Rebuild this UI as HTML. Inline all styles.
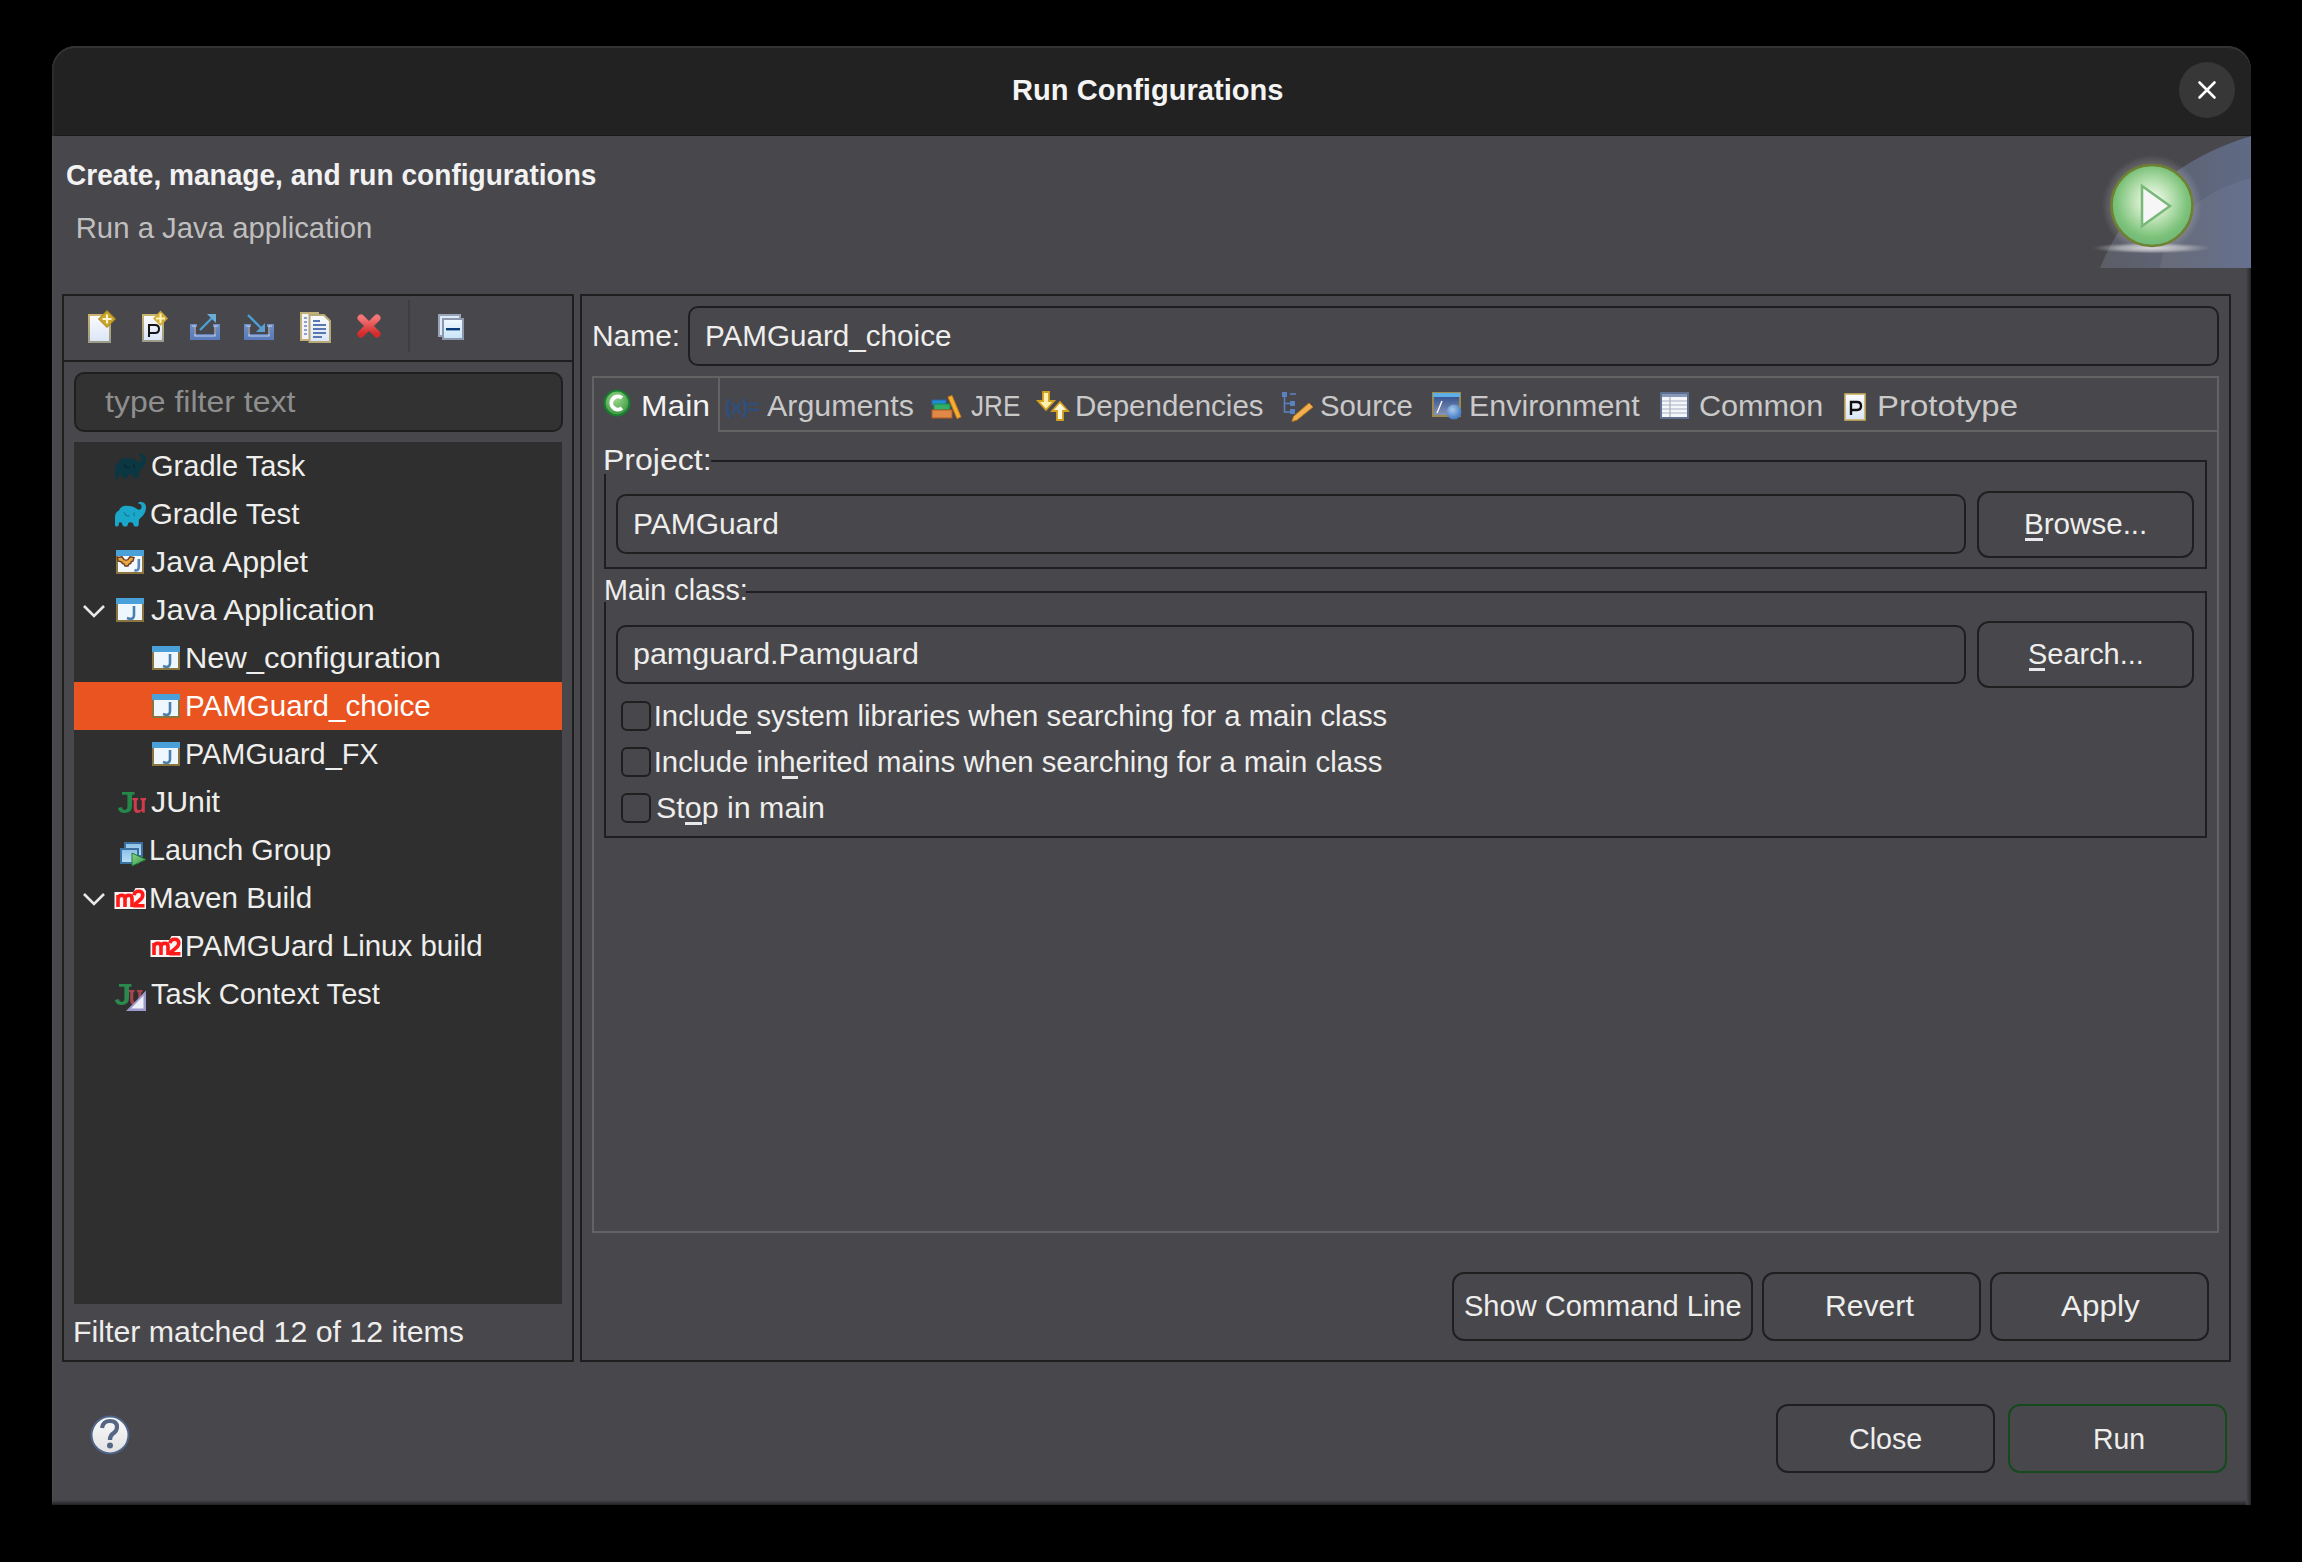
<!DOCTYPE html>
<html><head><meta charset="utf-8">
<style>
*{box-sizing:border-box;margin:0;padding:0}
html,body{width:2302px;height:1562px;background:#000;overflow:hidden}
body{position:relative;font-family:"Liberation Sans",sans-serif;font-size:29.33px;color:#eeeeec}
.a{position:absolute}
.t{position:absolute;line-height:29.33px;height:29.33px;white-space:pre}
.win{left:52px;top:46px;width:2199px;height:1459px;background:#48474c;border-radius:24px 24px 0 0;overflow:hidden}
.tbar{left:52px;top:46px;width:2199px;height:90px;background:#222222;border-radius:24px 24px 0 0;box-shadow:inset 0 2px 0 #333,inset 2px 0 0 #2c2c2c,inset 0 -1px 0 #1a1a1a}
.box{position:absolute;border:2px solid #1f1f1f}
.field{position:absolute;border:2px solid #1f1f1f;border-radius:10px}
.btn{position:absolute;border:2px solid #1f1f1f;border-radius:12px}
.ln{position:absolute;background:#1f1f1f}
.tl{position:absolute;background:#636363}
.gray{color:#c0bfbf}
.tab{color:#c9c9c9}
.cb{position:absolute;width:30px;height:30px;border:2px solid #1f1f1f;border-radius:6px}
.ul{position:absolute;height:3px;background:#e8e8e8}
</style></head><body>
<div class="a win"></div>
<div class="a tbar"></div>
<div class="a" style="left:52px;top:1500px;width:2199px;height:5px;background:linear-gradient(#48474c,#222226)"></div>
<div class="a" style="left:2246px;top:136px;width:5px;height:1369px;background:linear-gradient(90deg,#48474c,#26262a)"></div>
<div class="a" style="left:52px;top:136px;width:1px;height:1366px;background:#4d4c51"></div>
<div class="t" style="left:1011.7px;top:75px;font-weight:700;color:#f4f4f4;transform:scaleX(0.9919);transform-origin:0 0">Run Configurations</div>
<div class="a" style="left:2179px;top:62px;width:56px;height:56px;border-radius:28px;background:#373737"></div>

<!-- header -->
<div class="t" style="left:65.9px;top:160px;font-weight:700;color:#f2f2f2;transform:scaleX(0.9574);transform-origin:0 0">Create, manage, and run configurations</div>
<div class="t gray" style="left:75.7px;top:213px">Run a Java application</div>

<!-- left panel -->
<div class="box" style="left:62px;top:294px;width:512px;height:1068px"></div>
<div class="ln" style="left:64px;top:360px;width:508px;height:2px"></div>
<div class="a" style="left:408px;top:300px;width:2px;height:52px;background:#3c3b40"></div>
<div class="field" style="left:74px;top:372px;width:489px;height:60px;background:#323232"></div>
<div class="t" style="left:105.0px;top:387px;color:#8e8e8e;transform:scaleX(1.0920);transform-origin:0 0">type filter text</div>
<div class="a" style="left:74px;top:442px;width:488px;height:862px;background:#2f2f2f"></div>
<div class="a" style="left:74px;top:682px;width:488px;height:48px;background:#e95420"></div>
<div class="t" style="left:150.6px;top:451px;transform:scaleX(0.9896);transform-origin:0 0">Gradle Task</div>
<div class="t" style="left:150.0px;top:499px">Gradle Test</div>
<div class="t" style="left:151.0px;top:547px;transform:scaleX(1.0351);transform-origin:0 0">Java Applet</div>
<div class="t" style="left:151.0px;top:595px;transform:scaleX(1.0550);transform-origin:0 0">Java Application</div>
<div class="t" style="left:184.8px;top:643px;transform:scaleX(1.0534);transform-origin:0 0">New_configuration</div>
<div class="t" style="left:185.0px;top:691px;color:#ffffff;transform:scaleX(1.0075);transform-origin:0 0">PAMGuard_choice</div>
<div class="t" style="left:185.0px;top:739px;transform:scaleX(0.9845);transform-origin:0 0">PAMGuard_FX</div>
<div class="t" style="left:151.2px;top:787px;transform:scaleX(1.0333);transform-origin:0 0">JUnit</div>
<div class="t" style="left:149.2px;top:835px;transform:scaleX(0.9808);transform-origin:0 0">Launch Group</div>
<div class="t" style="left:149.0px;top:883px;transform:scaleX(1.0108);transform-origin:0 0">Maven Build</div>
<div class="t" style="left:185.4px;top:931px;transform:scaleX(1.0055);transform-origin:0 0">PAMGUard Linux build</div>
<div class="t" style="left:151.0px;top:979px;transform:scaleX(0.9913);transform-origin:0 0">Task Context Test</div>
<div class="t" style="left:73.2px;top:1317px;transform:scaleX(1.0340);transform-origin:0 0">Filter matched 12 of 12 items</div>

<!-- right panel -->
<div class="box" style="left:580px;top:294px;width:1651px;height:1068px"></div>
<div class="t" style="left:591.7px;top:321px;transform:scaleX(1.0198);transform-origin:0 0">Name:</div>
<div class="field" style="left:688px;top:306px;width:1531px;height:60px"></div>
<div class="t" style="left:705.0px;top:321px;transform:scaleX(1.0100);transform-origin:0 0">PAMGuard_choice</div>

<!-- tab folder -->
<div class="a" style="left:592px;top:376px;width:1627px;height:857px;border:2px solid #636363"></div>
<div class="tl" style="left:718px;top:378px;width:2px;height:54px"></div>
<div class="tl" style="left:718px;top:430px;width:1500px;height:2px"></div>
<div class="t" style="left:641.2px;top:391px;color:#f4f4f4;transform:scaleX(1.0864);transform-origin:0 0">Main</div>
<div class="t tab" style="left:767.0px;top:391px;transform:scaleX(1.0357);transform-origin:0 0">Arguments</div>
<div class="t tab" style="left:970.6px;top:391px;transform:scaleX(0.8906);transform-origin:0 0">JRE</div>
<div class="t tab" style="left:1075.0px;top:391px;transform:scaleX(1.0054);transform-origin:0 0">Dependencies</div>
<div class="t tab" style="left:1320.0px;top:391px">Source</div>
<div class="t tab" style="left:1468.9px;top:391px;transform:scaleX(1.0370);transform-origin:0 0">Environment</div>
<div class="t tab" style="left:1699.0px;top:391px;transform:scaleX(1.0435);transform-origin:0 0">Common</div>
<div class="t tab" style="left:1876.8px;top:391px;transform:scaleX(1.1230);transform-origin:0 0">Prototype</div>

<!-- project group -->
<div class="t" style="left:603.4px;top:445px;transform:scaleX(1.0915);transform-origin:0 0">Project:</div>
<div class="ln" style="left:711px;top:460px;width:1496px;height:2px"></div>
<div class="ln" style="left:2205px;top:460px;width:2px;height:109px"></div>
<div class="ln" style="left:604px;top:567px;width:1603px;height:2px"></div>
<div class="ln" style="left:604px;top:474px;width:2px;height:95px"></div>
<div class="field" style="left:616px;top:494px;width:1350px;height:60px"></div>
<div class="t" style="left:633.3px;top:509px;transform:scaleX(1.0210);transform-origin:0 0">PAMGuard</div>
<div class="btn" style="left:1977px;top:491px;width:217px;height:67px"></div>
<div class="t" style="left:2024.0px;top:509px;transform:scaleX(1.0085);transform-origin:0 0">Browse...</div>
<div class="ul" style="left:2025px;top:538px;width:18px"></div>

<!-- main class group -->
<div class="t" style="left:603.6px;top:575px;transform:scaleX(0.9801);transform-origin:0 0">Main class:</div>
<div class="ln" style="left:746px;top:591px;width:1461px;height:2px"></div>
<div class="ln" style="left:2205px;top:591px;width:2px;height:247px"></div>
<div class="ln" style="left:604px;top:836px;width:1603px;height:2px"></div>
<div class="ln" style="left:604px;top:602px;width:2px;height:236px"></div>
<div class="field" style="left:616px;top:625px;width:1350px;height:59px"></div>
<div class="t" style="left:632.9px;top:639px;transform:scaleX(1.0380);transform-origin:0 0">pamguard.Pamguard</div>
<div class="btn" style="left:1977px;top:621px;width:217px;height:67px"></div>
<div class="t" style="left:2028.0px;top:639px;transform:scaleX(0.9867);transform-origin:0 0">Search...</div>
<div class="ul" style="left:2029px;top:668px;width:16px"></div>

<div class="cb" style="left:621px;top:701px"></div>
<div class="t" style="left:653.7px;top:701px">Include system libraries when searching for a main class</div>
<div class="ul" style="left:736px;top:731px;width:15px"></div>
<div class="cb" style="left:621px;top:747px"></div>
<div class="t" style="left:653.7px;top:747px">Include inherited mains when searching for a main class</div>
<div class="ul" style="left:782px;top:776px;width:16px"></div>
<div class="cb" style="left:621px;top:793px"></div>
<div class="t" style="left:655.7px;top:793px;transform:scaleX(1.0365);transform-origin:0 0">Stop in main</div>
<div class="ul" style="left:685px;top:822px;width:17px"></div>

<!-- bottom buttons -->
<div class="btn" style="left:1452px;top:1272px;width:301px;height:69px"></div>
<div class="t" style="left:1463.7px;top:1291px;transform:scaleX(0.9903);transform-origin:0 0">Show Command Line</div>
<div class="btn" style="left:1762px;top:1272px;width:219px;height:69px"></div>
<div class="t" style="left:1824.9px;top:1291px;transform:scaleX(1.0274);transform-origin:0 0">Revert</div>
<div class="btn" style="left:1990px;top:1272px;width:219px;height:69px"></div>
<div class="t" style="left:2061.4px;top:1291px;transform:scaleX(1.0722);transform-origin:0 0">Apply</div>
<div class="btn" style="left:1776px;top:1404px;width:219px;height:69px"></div>
<div class="t" style="left:1848.6px;top:1424px;transform:scaleX(0.9778);transform-origin:0 0">Close</div>
<div class="btn" style="left:2008px;top:1404px;width:219px;height:69px;border-color:#154a1c"></div>
<div class="t" style="left:2092.7px;top:1424px;transform:scaleX(0.9673);transform-origin:0 0">Run</div>

<svg class="a" style="left:0;top:0" width="2302" height="1562" viewBox="0 0 2302 1562">

<defs>
 <linearGradient id="docg" x1="0" y1="0" x2="0" y2="1"><stop offset="0" stop-color="#fbfbfd"/><stop offset="1" stop-color="#d9e5f6"/></linearGradient>
 <linearGradient id="docb" x1="0" y1="0" x2="0" y2="1"><stop offset="0" stop-color="#c8b46c"/><stop offset="1" stop-color="#9c9c8c"/></linearGradient>
 <linearGradient id="tray" x1="0" y1="0" x2="0" y2="1"><stop offset="0" stop-color="#6f8fc8"/><stop offset="1" stop-color="#5878b8"/></linearGradient>
 <linearGradient id="redx" x1="0" y1="0" x2="0" y2="1"><stop offset="0" stop-color="#f27676"/><stop offset="1" stop-color="#d42a2a"/></linearGradient>
 <linearGradient id="wing" x1="0" y1="0" x2="0" y2="1"><stop offset="0" stop-color="#f2f8ff"/><stop offset="1" stop-color="#c6e4f8"/></linearGradient>
 <radialGradient id="cg" cx="0.45" cy="0.35" r="0.6"><stop offset="0" stop-color="#9fd88a"/><stop offset="1" stop-color="#3f9d47"/></radialGradient>
 <radialGradient id="playg" cx="0.5" cy="0.45" r="0.55"><stop offset="0" stop-color="#ffffff"/><stop offset="0.35" stop-color="#c8e8c0"/><stop offset="0.8" stop-color="#7cc27a"/><stop offset="1" stop-color="#6fb779"/></radialGradient>
 <radialGradient id="shad" cx="0.5" cy="0.5" r="0.5"><stop offset="0" stop-color="#d8d8dc" stop-opacity="0.95"/><stop offset="0.55" stop-color="#c0c0c6" stop-opacity="0.7"/><stop offset="1" stop-color="#a0a0a8" stop-opacity="0"/></radialGradient>
 <radialGradient id="halo" cx="0.5" cy="0.5" r="0.5"><stop offset="0.6" stop-color="#ffffff" stop-opacity="0.35"/><stop offset="1" stop-color="#ffffff" stop-opacity="0"/></radialGradient>
 <linearGradient id="wedge" x1="0" y1="0" x2="1" y2="0"><stop offset="0" stop-color="#5c5d66"/><stop offset="1" stop-color="#5f6a85"/></linearGradient>
 <linearGradient id="wedge2" x1="0" y1="0" x2="1" y2="0"><stop offset="0" stop-color="#686b78"/><stop offset="1" stop-color="#65718f"/></linearGradient>
 <radialGradient id="ballg" cx="0.4" cy="0.35" r="0.65"><stop offset="0" stop-color="#a8c8ec"/><stop offset="1" stop-color="#3f78c0"/></radialGradient>
 <linearGradient id="helpg" x1="0" y1="0" x2="0" y2="1"><stop offset="0" stop-color="#fafafa"/><stop offset="1" stop-color="#e2e2e2"/></linearGradient>
 <linearGradient id="lg" x1="0" y1="0" x2="0" y2="1"><stop offset="0" stop-color="#8cc0e8"/><stop offset="1" stop-color="#b8e0f6"/></linearGradient>
 <linearGradient id="gr" x1="0" y1="0" x2="1" y2="1"><stop offset="0" stop-color="#8fd08a"/><stop offset="1" stop-color="#2d9a45"/></linearGradient>

 <g id="japp">
  <rect x="2" y="4" width="28" height="24" fill="#8a7540"/>
  <rect x="4" y="10" width="24" height="16" fill="#eef7fd"/>
  <rect x="2" y="4" width="28" height="6" fill="#4aa0d8"/>
  <path d="M20 12 L20 21 Q20 25 16 25 L13 24" fill="none" stroke="#4b7fb0" stroke-width="2.6"/>
 </g>
 <g id="m2">
  <path d="M0.5 10 H19.5 L21.5 6 H30 L32 9 V27 H0.5 Z" fill="#f8f4f4"/>
  <path d="M4 25 V13 M4 16.5 Q4.5 13.2 7.8 13.2 Q11 13.2 11 16.5 V25 M11 16.5 Q11.5 13.2 14.8 13.2 Q18 13.2 18 16.5 V25" fill="none" stroke="#ff1a1a" stroke-width="3.6"/>
  <path d="M20 13.2 Q20.6 9.2 24.6 9.2 Q28.8 9.2 28.8 13 Q28.8 15.8 25.5 18.3 L21 22 V23.8 H30.5" fill="none" stroke="#ff1a1a" stroke-width="3.6"/>
 </g>
 <g id="J"><path d="M8 6 H20.5 V8.8 H18 V20 Q18 27 10.5 27 Q5 27 3.8 22 L7.6 21 Q8.4 24 10.6 24 Q13.4 24 13.4 20 V8.8 H8 Z"/></g>
 <g id="u"><path d="M18 12 H23.5 V14.3 H22.3 V21 Q22.3 24.2 24.8 24.2 Q27.3 24.2 27.3 21 V14.3 H26 V12 H31.5 V14.3 H30.3 V26.6 H27.6 V24.6 Q26.2 27 23.2 27 Q19.2 27 19.2 22 V14.3 H18 Z"/></g>
 <g id="eleph">
  <path d="M1 27 L1 19 Q1 14 5 12.5 Q6.5 8 12 7.8 Q19 7.8 23 11 Q25 12.3 26.8 11 Q28.3 9 27 6.8 Q25.8 5.6 24.5 5.8 Q23.6 4.2 26.5 3.8 Q31.5 4 32 9 Q32 15.5 27 19.5 L25 21.5 L24.6 27.3 Q24.3 28.6 22.8 28.6 L21.3 28.6 Q20 28.6 19.6 27.2 L18.8 24.8 Q16.5 23.8 14.4 24.8 L13.6 27.3 Q13.2 28.6 11.8 28.6 L10.4 28.6 Q9 28.6 8.6 27.2 L7.8 24.8 Q6 23.8 5 24.8 L4.6 27.3 Q4.2 28.6 2.8 28.6 Q1 28.6 1 27 Z"/>
  <path d="M10 14 Q12 19 15.5 17.5 M20 14.5 Q20.5 16.5 20 18" fill="none" stroke="#000" stroke-opacity="0.22" stroke-width="1.5"/>
 </g>
 <g id="chev"><path d="M-10 -5 L0 5 L10 -5" fill="none" stroke="#e8e8e8" stroke-width="2.6"/></g>
</defs>

<path d="M2199.5 82.5 L2214.5 97.5 M2214.5 82.5 L2199.5 97.5" stroke="#ffffff" stroke-width="2.6" stroke-linecap="round"/>
<path d="M2100 268 Q2140 170 2251 136 L2251 268 Z" fill="url(#wedge)"/>
<path d="M2160 268 Q2170 200 2251 178 L2251 268 Z" fill="url(#wedge2)"/>
<ellipse cx="2152" cy="248" rx="60" ry="5.5" fill="url(#shad)"/>
<circle cx="2152" cy="205" r="50" fill="url(#halo)"/>
<circle cx="2152" cy="205.5" r="40.5" fill="url(#playg)" stroke="#6f8030" stroke-width="2.6"/>
<path d="M2142 186 L2170 206 L2142 226 Z" fill="#f6f6f6" stroke="#78b878" stroke-width="2.5" stroke-linejoin="miter"/>
<rect x="89" y="315" width="21" height="27" fill="url(#docg)" stroke="url(#docb)" stroke-width="2"/>
<path d="M107 310.5 L115.5 319 L107 327.5 L98.5 319 Z" fill="#c9a42a" stroke="#a88318" stroke-width="1"/>
<path d="M102.5 319 H111.5 M107 314.5 V323.5" stroke="#fff4cc" stroke-width="2.2"/>
<rect x="143" y="315" width="20" height="26" fill="url(#docg)" stroke="url(#docb)" stroke-width="2"/>
<path d="M149 337 V325 H155 Q159 325 159 329 Q159 333 155 333 H149" fill="none" stroke="#151515" stroke-width="2"/>
<path d="M160.5 310.5 L168 318.4 L160.5 326 L153 318.4 Z" fill="#d2ac30" opacity="0.95"/>
<path d="M156 318.4 H165 M160.5 313.5 V323" stroke="#fff2bb" stroke-width="2"/>
<path d="M190 324 H197 V327 H194 V334 H216 V327 H213 V324 H220 V340 H190 Z" fill="url(#tray)"/>
<path d="M192 326 H195 V336 H215 V326 H218" fill="none" stroke="#d8e4f4" stroke-width="1.2" opacity="0.8"/>
<path d="M200 330 L213 317" stroke="#4aa0d4" stroke-width="2.4"/><path d="M216 314 L216 323 L207 314 Z" fill="#6aaed8"/>
<path d="M244 324 H251 V327 H248 V334 H270 V327 H267 V324 H274 V340 H244 Z" fill="url(#tray)"/>
<path d="M246 326 H249 V336 H269 V326 H272" fill="none" stroke="#d8e4f4" stroke-width="1.2" opacity="0.8"/>
<path d="M248 315 L261 328" stroke="#4aa0d4" stroke-width="2.4"/><path d="M265 332 L256 332 L265 323 Z" fill="#5a9fd0"/>
<rect x="301" y="313" width="17" height="27" fill="#f2f4fa" stroke="#c2b27a" stroke-width="2"/>
<path d="M304 318 H307 M304 322 H307 M304 326 H307 M304 330 H307 M304 334 H307" stroke="#6a88c0" stroke-width="1.6"/>
<path d="M309.5 315 H324 L330 321 V342 H309.5 Z" fill="url(#docg)" stroke="#b8aa78" stroke-width="2"/>
<path d="M313 321 H320 M313 325 H326 M313 329 H326 M313 333 H326 M313 337 H322" stroke="#5a78b0" stroke-width="1.8"/>
<path d="M361 318 L377 334 M377 318 L361 334" stroke="url(#redx)" stroke-width="7" stroke-linecap="round"/>
<rect x="408" y="300" width="2" height="52" fill="#3e3d42"/>
<rect x="439" y="315" width="21" height="21" fill="#dcecf8" stroke="#9aa4b8" stroke-width="2"/>
<rect x="443" y="319" width="20" height="20" fill="url(#wing)" stroke="#8e98ac" stroke-width="2"/>
<rect x="446" y="328" width="14" height="2.4" fill="#0b3a78"/>
<use href="#eleph" x="114" y="450" fill="#0b3742"/>
<use href="#eleph" x="114" y="498" fill="#1aa7c9"/>
<g transform="translate(114,546)"><rect x="2" y="4" width="28" height="24" fill="#8a7540"/><rect x="4" y="10" width="24" height="16" fill="#f2f8fc"/><rect x="2" y="4" width="28" height="6" fill="#4aa0d8"/>
<path d="M3.5 11.5 L8 10.8 L10 13.5 Q12 14.8 14 13.5 L16 10.8 L20 11.5 L19 15 L17 16 L16.8 17.5 L15 18 L14 20 L11 20 L10 18 L8.2 17.5 L7.8 16 L4 15 Z" fill="#e8a840" stroke="#6a3a20" stroke-width="1.4"/>
<path d="M24.8 13 L24.8 20.5 Q24.8 24.5 21.5 24.5 L20.5 24" fill="none" stroke="#5a88b8" stroke-width="2.6"/></g>
<use href="#japp" x="114" y="594"/>
<use href="#chev" x="94" y="611"/>
<use href="#japp" x="150" y="642"/>
<use href="#japp" x="150" y="690"/>
<use href="#japp" x="150" y="738"/>
<g transform="translate(114,786)"><use href="#J" fill="#23884a"/><use href="#u" fill="#d03c4c" transform="translate(0.5,0)"/></g>
<g transform="translate(114,834)">
<rect x="11" y="9" width="17" height="13" fill="url(#lg)" stroke="#3a6fa0" stroke-width="2"/>
<rect x="7" y="15" width="17" height="14" fill="url(#lg)" stroke="#3a6fa0" stroke-width="2"/>
<path d="M18 19 L32 25.5 L18 32 Z" fill="url(#gr)" stroke="#1e7a35" stroke-width="1"/></g>
<use href="#m2" x="114" y="882"/>
<use href="#chev" x="94" y="899"/>
<use href="#m2" x="150" y="930"/>
<g transform="translate(114,978)">
<use href="#u" fill="#c84858" opacity="0.8" transform="translate(-3,0)"/>
<path d="M32 12.5 L32 33 L12 33 Z" fill="#9a9acc"/>
<path d="M29.5 17.5 L29.5 30.5 L17 30.5 Z" fill="#eeeef8"/>
<use href="#J" fill="#2a8a4e" transform="translate(-3,0)"/></g>
<circle cx="617" cy="403" r="12.5" fill="url(#cg)" stroke="#1a7a30" stroke-width="2.2"/>
<path d="M622 398 A6.5 6.5 0 1 0 622 408" fill="none" stroke="#ffffff" stroke-width="4"/>
<text x="725" y="414" font-family="Liberation Sans" font-weight="700" font-size="21" fill="#2e4f7e" letter-spacing="-1">(x)=</text>
<rect x="932" y="400" width="14" height="5" fill="#1f8ed8" stroke="#3060a0" stroke-width="1"/>
<rect x="934" y="404" width="16" height="6" fill="#2fae68" stroke="#188848" stroke-width="1"/>
<rect x="932" y="410" width="20" height="8" fill="#e08848" stroke="#b85a20" stroke-width="1"/>
<path d="M948 397 L952 395.5 L961 417 L957 418.5 Z" fill="#f2b030" stroke="#d07818" stroke-width="1"/>
<path d="M1043 392 H1049 V401 H1054 L1046 410 L1038 401 H1043 Z" fill="#fff0b0" stroke="#d4a020" stroke-width="1.8"/>
<path d="M1057 420 H1063 V411 H1068 L1060 402 L1052 411 H1057 Z" fill="#fff8d8" stroke="#d4a020" stroke-width="1.8"/>
<rect x="1282" y="392" width="5" height="5" fill="#5b82c0"/>
<path d="M1284.5 397 V412 H1290 M1284.5 403.5 H1290 M1290 394 H1296" stroke="#5b82c0" stroke-width="1.6" fill="none"/>
<rect x="1290" y="401" width="5" height="5" fill="#5b82c0"/><rect x="1290" y="409" width="5" height="5" fill="#5b82c0"/>
<path d="M1309 403 L1313 407 L1297 420 L1292 421.5 L1293.5 416.5 Z" fill="#f0b050" stroke="#c07820" stroke-width="1"/>
<linearGradient id="envg" x1="0" y1="0" x2="0" y2="1"><stop offset="0" stop-color="#28488a"/><stop offset="1" stop-color="#8a98b8"/></linearGradient>
<rect x="1433" y="393" width="27" height="23" fill="url(#envg)" stroke="#9a8a50" stroke-width="2"/>
<rect x="1433" y="393" width="27" height="4" fill="#5eaee8"/>
<path d="M1437 413 L1442 401" stroke="#ffffff" stroke-width="1.4"/>
<circle cx="1454" cy="412" r="7.5" fill="url(#ballg)"/>
<rect x="1661" y="393" width="27" height="25" fill="#f4f6fa" stroke="#5e6f90" stroke-width="2"/>
<rect x="1662" y="394" width="25" height="3" fill="#8898b8"/>
<path d="M1662 401 H1687 M1662 405 H1687 M1662 409 H1687 M1662 413 H1687 M1670 397 V417" stroke="#a8b0c0" stroke-width="1.2"/>
<rect x="1845" y="394" width="20" height="26" fill="url(#docg)" stroke="#c8b060" stroke-width="1.6"/>
<path d="M1851 415 V402 H1857 Q1861 402 1861 406 Q1861 410 1857 410 H1851" fill="none" stroke="#101010" stroke-width="2.4"/>
<circle cx="110" cy="1435" r="18.5" fill="url(#helpg)" stroke="#4e6488" stroke-width="2"/>
<path d="M102 1428 Q103 1421 110 1421 Q117 1421 117 1427 Q117 1431 112.5 1434 Q110 1436 110 1440" fill="none" stroke="#566785" stroke-width="4.2"/>
<circle cx="110" cy="1445.5" r="3" fill="#566785"/>
</svg>
</body></html>
